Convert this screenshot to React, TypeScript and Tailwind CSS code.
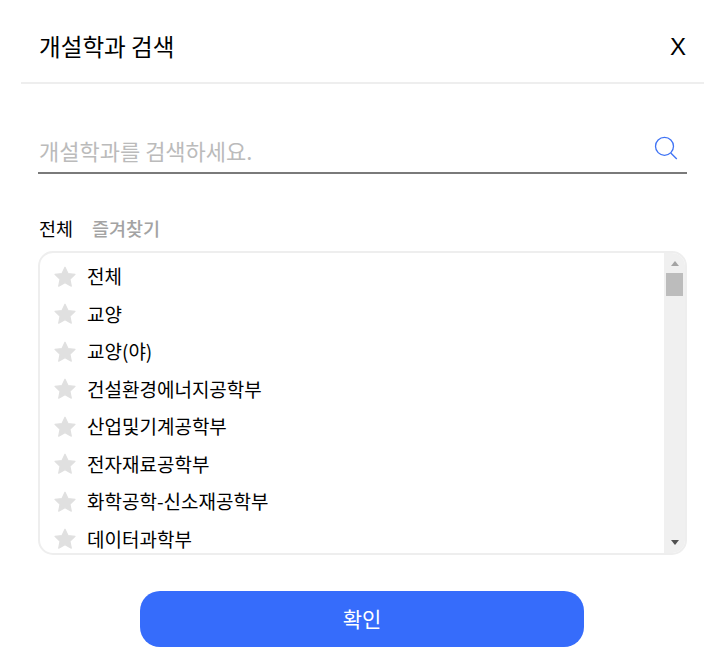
import React from 'react';

const departments = [
  '전체',
  '교양',
  '교양(야)',
  '건설환경에너지공학부',
  '산업및기계공학부',
  '전자재료공학부',
  '화학공학-신소재공학부',
  '데이터과학부',
];

const StarIcon = () => (
  <svg width="22" height="21" viewBox="0 0 22 21" className="shrink-0">
    <path
      d="M11 1.2l3 6.4 7 .8-5.1 4.8 1.4 6.9L11 16.8l-6.3 3.3 1.4-6.9L1 8.4l7-.8z"
      fill="#e0e0e0"
      stroke="#e0e0e0"
      strokeWidth="1.2"
      strokeLinejoin="round"
    />
  </svg>
);

const SearchIcon = () => (
  <svg width="24" height="24" viewBox="0 0 24 24" fill="none" stroke="#3f73f5" strokeWidth="1.3">
    <circle cx="10.5" cy="10.3" r="9" />
    <path d="M16.8 17l6 6" />
  </svg>
);

export default function App() {
  return (
    <div
      className="w-[726px] h-[662px] bg-white overflow-hidden text-black"
      style={{ fontFamily: '"Noto Sans CJK KR", "Noto Sans", sans-serif' }}
    >
      <div className="ml-[21px] mr-[22px] h-[84px] pl-[18px] pr-[18px] border-b-2 border-[#eeeeee] flex items-center justify-between">
        <h1 className="text-[23.6px] leading-[30px] mt-[10px] font-normal">개설학과 검색</h1>
        <button
          className="text-[24px] leading-[30px] mt-[12px]"
          style={{ fontFamily: '"Liberation Sans", sans-serif' }}
        >
          X
        </button>
      </div>

      <div className="ml-[38px] mr-[39px] mt-[50px] h-[40px] border-b-2 border-[#7a7a7a] flex items-center justify-between">
        <span className="text-[22px] leading-[30px] -mt-[6px] ml-px text-[#bbbbbb]">
          개설학과를 검색하세요.
        </span>
        <span className="-mt-[10px] mr-[9px]">
          <SearchIcon />
        </span>
      </div>

      <div className="ml-[39px] mr-[38px] mt-[42px] flex gap-[19px] text-[18.5px] leading-[24px] font-normal">
        <span>전체</span>
        <span className="text-[#a3a3a3] font-medium">즐겨찾기</span>
      </div>

      <div className="ml-[38px] mr-[39px] mt-[11px] h-[304px] border-2 border-[#eeeeee] rounded-[15px] flex overflow-hidden">
        <ul className="flex-1 overflow-hidden pl-[14px] pt-[4.5px]">
          {departments.map((name) => (
            <li key={name} className="h-[37.5px] flex items-center gap-[11px] text-[19px]">
              <StarIcon />
              <span>{name}</span>
            </li>
          ))}
        </ul>
        <div className="w-[21px] bg-[#f0f0f0] flex flex-col items-center">
          <div className="mt-[8px] w-0 h-0 border-x-[4px] border-x-transparent border-b-[5px] border-b-[#a3a3a3]" />
          <div className="mt-[7px] w-[17px] h-[23px] bg-[#bcbcbc]" />
          <div className="mt-auto mb-[8px] w-0 h-0 border-x-[4px] border-x-transparent border-t-[5px] border-t-[#505050]" />
        </div>
      </div>

      <button className="block ml-[140px] mt-[36px] w-[444px] h-[56px] rounded-[20px] bg-[#366cfb] text-white text-[21px]">
        확인
      </button>
    </div>
  );
}
